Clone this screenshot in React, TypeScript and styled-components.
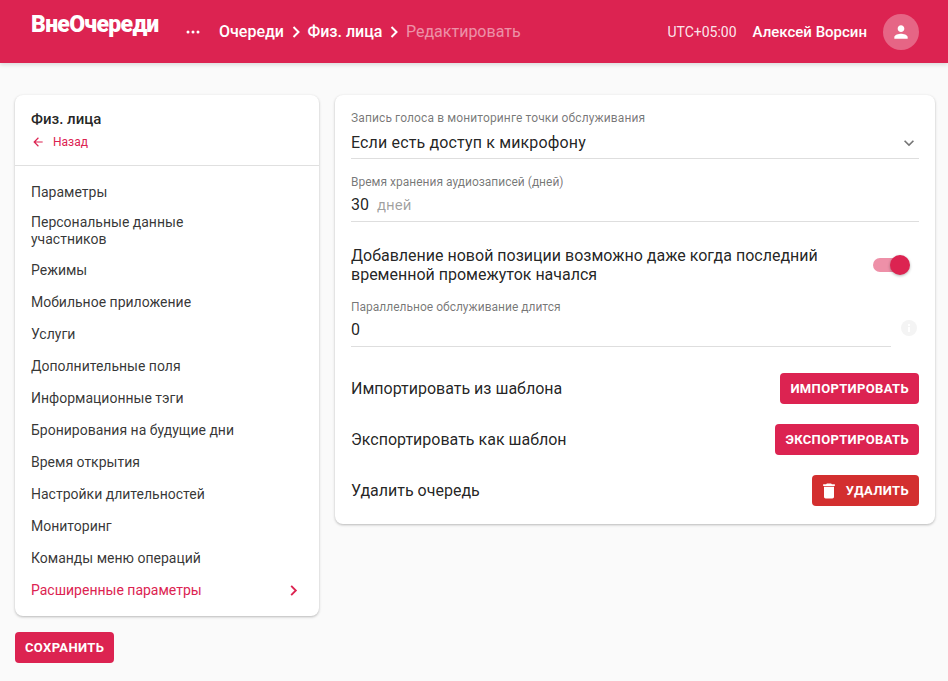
import React from "react";
import styled, { createGlobalStyle } from "styled-components";

const Global = createGlobalStyle`
  html, body { margin: 0; padding: 0; background: #fafafa; }
  body { font-family: Roboto, "Liberation Sans", sans-serif; color: rgba(0,0,0,.87); }
  * { box-sizing: border-box; }
`;

const Page = styled.div`
  width: 948px;
  height: 681px;
  overflow: hidden;
`;

const Header = styled.header`
  height: 63px;
  background: #dc2351;
  box-shadow: 0 2px 4px rgba(0,0,0,.12);
  display: flex;
  align-items: center;
  padding: 0 29px 0 31px;
  color: #fff;
`;

const Logo = styled.div`
  font-size: 23px;
  font-weight: 900;
  letter-spacing: -0.7px;
  width: 154px;
  position: relative;
  top: -7px;
`;

const Crumbs = styled.nav`
  display: flex;
  align-items: center;
  font-size: 16px;
  flex: 1;
`;

const Dots = styled.span`
  display: flex;
  width: 34px;
  align-items: center;
`;

const Crumb = styled.span<{ $muted?: boolean }>`
  font-weight: ${p => (p.$muted ? 400 : 500)};
  color: ${p => (p.$muted ? "rgba(255,255,255,.5)" : "#fff")};
`;

const CrumbSep = styled.span`
  width: 23.5px;
  display: flex;
  justify-content: center;
`;

const Tz = styled.span`
  font-size: 14px;
  margin-right: 16px;
  color: rgba(255,255,255,.9);
`;

const UserName = styled.span`
  font-size: 15px;
  font-weight: 500;
  margin-right: 16px;
`;

const Avatar = styled.span`
  width: 36px;
  height: 36px;
  border-radius: 50%;
  background: rgba(255,255,255,.3);
  display: flex;
  align-items: center;
  justify-content: center;
`;

const Main = styled.main`
  display: grid;
  grid-template-columns: 304px 600px;
  gap: 16px;
  padding: 32px 0 0 15px;
  align-items: start;
`;

const Card = styled.section`
  background: #fff;
  border-radius: 8px;
  box-shadow: 0 1px 3px rgba(0,0,0,.22), 0 1px 2px rgba(0,0,0,.06);
`;

const SideHead = styled.div`
  padding: 15px 16px 0;
  height: 71px;
  border-bottom: 1px solid #e0e0e0;
`;

const SideTitle = styled.div`
  font-size: 15px;
  font-weight: 500;
  line-height: 18px;
`;

const BackLink = styled.div`
  display: flex;
  align-items: center;
  gap: 8px;
  margin-top: 6px;
  font-size: 12px;
  line-height: 16px;
  color: #dc2351;
`;

const NavList = styled.ul`
  list-style: none;
  margin: 0;
  padding: 10px 0;
`;

const NavItem = styled.li<{ $active?: boolean }>`
  min-height: 32px;
  padding: 6px 19px 6px 16px;
  display: flex;
  align-items: center;
  justify-content: space-between;
  font-size: 14px;
  line-height: 17px;
  color: ${p => (p.$active ? "#dc2351" : "rgba(0,0,0,.8)")};
`;

const NavText = styled.span`
  max-width: 225px;
`;

const SaveRow = styled.div`
  margin-top: 16px;
`;

const Button = styled.button<{ $danger?: boolean }>`
  height: 31px;
  border: 0;
  border-radius: 4px;
  background: ${p => (p.$danger ? "#d32f2f" : "#dc2351")};
  color: #fff;
  padding: 0 10px;
  font: 700 13px Roboto, sans-serif;
  letter-spacing: .35px;
  text-transform: uppercase;
  display: inline-flex;
  align-items: center;
  gap: 7px;
  flex: none;
`;

const TrashIcon = styled.svg`
  margin-left: -3px;
`;

const Form = styled(Card)`
  padding: 16px;
  height: 429px;
`;

const Field = styled.div<{ $narrow?: boolean; $select?: boolean }>`
  border-bottom: 1px solid #dedede;
  height: ${p => (p.$select ? "48px" : "47px")};
  margin-bottom: 16px;
  width: ${p => (p.$narrow ? "540px" : "100%")};
`;

const Label = styled.div<{ $select?: boolean }>`
  font-size: 12px;
  line-height: 14px;
  letter-spacing: ${p => (p.$select ? ".12px" : "0")};
  color: rgba(0,0,0,.55);
`;

const Value = styled.div<{ $select?: boolean }>`
  display: flex;
  align-items: center;
  justify-content: space-between;
  margin-top: ${p => (p.$select ? "7px" : "5px")};
  font-size: 16px;
  line-height: 22px;
  letter-spacing: ${p => (p.$select ? ".15px" : "0")};
`;

const Unit = styled.span`
  color: rgba(0,0,0,.38);
  font-size: 15px;
  margin-left: 8px;
`;

const SwitchRow = styled.div`
  display: flex;
  align-items: center;
  justify-content: space-between;
  margin-top: 24px;
  height: 38px;
  padding-right: 12px;
`;

const SwitchText = styled.div`
  font-size: 16px;
  line-height: 19px;
  width: 490px;
`;

const SwitchTrack = styled.span`
  position: relative;
  width: 34px;
  height: 14px;
  border-radius: 7px;
  background: #ee90a8;
`;

const SwitchThumb = styled.span`
  position: absolute;
  right: -3px;
  top: -3px;
  width: 20px;
  height: 20px;
  border-radius: 50%;
  background: #dc2351;
  box-shadow: 0 1px 3px rgba(0,0,0,.3);
`;

const InfoRow = styled.div`
  display: flex;
  margin-top: 16px;
`;

const InfoIcon = styled.span`
  width: 16px;
  height: 16px;
  margin: 20px 0 0 10px;
  border-radius: 50%;
  background: #f4f4f4;
  color: #fff;
  display: flex;
  align-items: center;
  justify-content: center;
  flex: none;
`;

const ActionRow = styled.div`
  display: flex;
  align-items: center;
  justify-content: space-between;
  height: 31px;
  margin-bottom: 20px;
  font-size: 16px;
`;

const Actions = styled.div`
  margin-top: 10px;
`;

const Chevron = ({ color = "#fff", size = 14 }: { color?: string; size?: number }) => (
  <svg width={size} height={size} viewBox="0 0 14 14" fill="none">
    <path d="M4.5 2 L9.5 7 L4.5 12" stroke={color} strokeWidth="2" />
  </svg>
);

const items = [
  "Параметры",
  "Персональные данные участников",
  "Режимы",
  "Мобильное приложение",
  "Услуги",
  "Дополнительные поля",
  "Информационные тэги",
  "Бронирования на будущие дни",
  "Время открытия",
  "Настройки длительностей",
  "Мониторинг",
  "Команды меню операций",
];

export default function App() {
  return (
    <Page>
      <Global />
      <Header>
        <Logo>ВнеОчереди</Logo>
        <Crumbs>
          <Dots>
            <svg width="16" height="4" viewBox="0 0 16 4" fill="#fff">
              <circle cx="3" cy="2" r="1.5" /><circle cx="8" cy="2" r="1.5" /><circle cx="13" cy="2" r="1.5" />
            </svg>
          </Dots>
          <Crumb>Очереди</Crumb>
          <CrumbSep><Chevron /></CrumbSep>
          <Crumb>Физ. лица</Crumb>
          <CrumbSep><Chevron /></CrumbSep>
          <Crumb $muted>Редактировать</Crumb>
        </Crumbs>
        <Tz>UTC+05:00</Tz>
        <UserName>Алексей Ворсин</UserName>
        <Avatar>
          <svg width="20" height="20" viewBox="0 0 24 24" fill="#fff">
            <path d="M12 12c2.21 0 4-1.79 4-4s-1.79-4-4-4-4 1.79-4 4 1.79 4 4 4zm0 2c-2.67 0-8 1.34-8 4v2h16v-2c0-2.66-5.33-4-8-4z" />
          </svg>
        </Avatar>
      </Header>
      <Main>
        <div>
          <Card>
            <SideHead>
              <SideTitle>Физ. лица</SideTitle>
              <BackLink>
                <svg width="14" height="14" viewBox="0 0 24 24" fill="#dc2351">
                  <path d="M20 11H7.83l5.59-5.59L12 4l-8 8 8 8 1.41-1.41L7.83 13H20v-2z" />
                </svg>
                Назад
              </BackLink>
            </SideHead>
            <NavList>
              {items.map(t => (
                <NavItem key={t}><NavText>{t}</NavText></NavItem>
              ))}
              <NavItem $active>
                <NavText>Расширенные параметры</NavText>
                <Chevron color="#dc2351" size={13} />
              </NavItem>
            </NavList>
          </Card>
          <SaveRow><Button>Сохранить</Button></SaveRow>
        </div>
        <Form>
          <Field $select>
            <Label $select>Запись голоса в мониторинге точки обслуживания</Label>
            <Value $select>
              Если есть доступ к микрофону
              <svg width="20" height="20" viewBox="0 0 24 24" fill="#757575">
                <path d="M7.41 8.59 12 13.17l4.59-4.58L18 10l-6 6-6-6z" />
              </svg>
            </Value>
          </Field>
          <Field>
            <Label>Время хранения аудиозаписей (дней)</Label>
            <Value><span>30<Unit>дней</Unit></span></Value>
          </Field>
          <SwitchRow>
            <SwitchText>Добавление новой позиции возможно даже когда последний временной промежуток начался</SwitchText>
            <SwitchTrack><SwitchThumb /></SwitchTrack>
          </SwitchRow>
          <InfoRow>
            <Field $narrow>
              <Label>Параллельное обслуживание длится</Label>
              <Value>0</Value>
            </Field>
            <InfoIcon>
              <svg width="10" height="10" viewBox="0 0 10 10" fill="#fff">
                <rect x="4" y="4" width="2" height="5" /><rect x="4" y="1" width="2" height="2" />
              </svg>
            </InfoIcon>
          </InfoRow>
          <Actions>
            <ActionRow>Импортировать из шаблона<Button>Импортировать</Button></ActionRow>
            <ActionRow>Экспортировать как шаблон<Button>Экспортировать</Button></ActionRow>
            <ActionRow>
              Удалить очередь
              <Button $danger>
                <TrashIcon width="20" height="20" viewBox="0 0 24 24" fill="#fff">
                  <path d="M6 19c0 1.1.9 2 2 2h8c1.1 0 2-.9 2-2V7H6v12zM19 4h-3.5l-1-1h-5l-1 1H5v2h14V4z" />
                </TrashIcon>
                Удалить
              </Button>
            </ActionRow>
          </Actions>
        </Form>
      </Main>
    </Page>
  );
}
